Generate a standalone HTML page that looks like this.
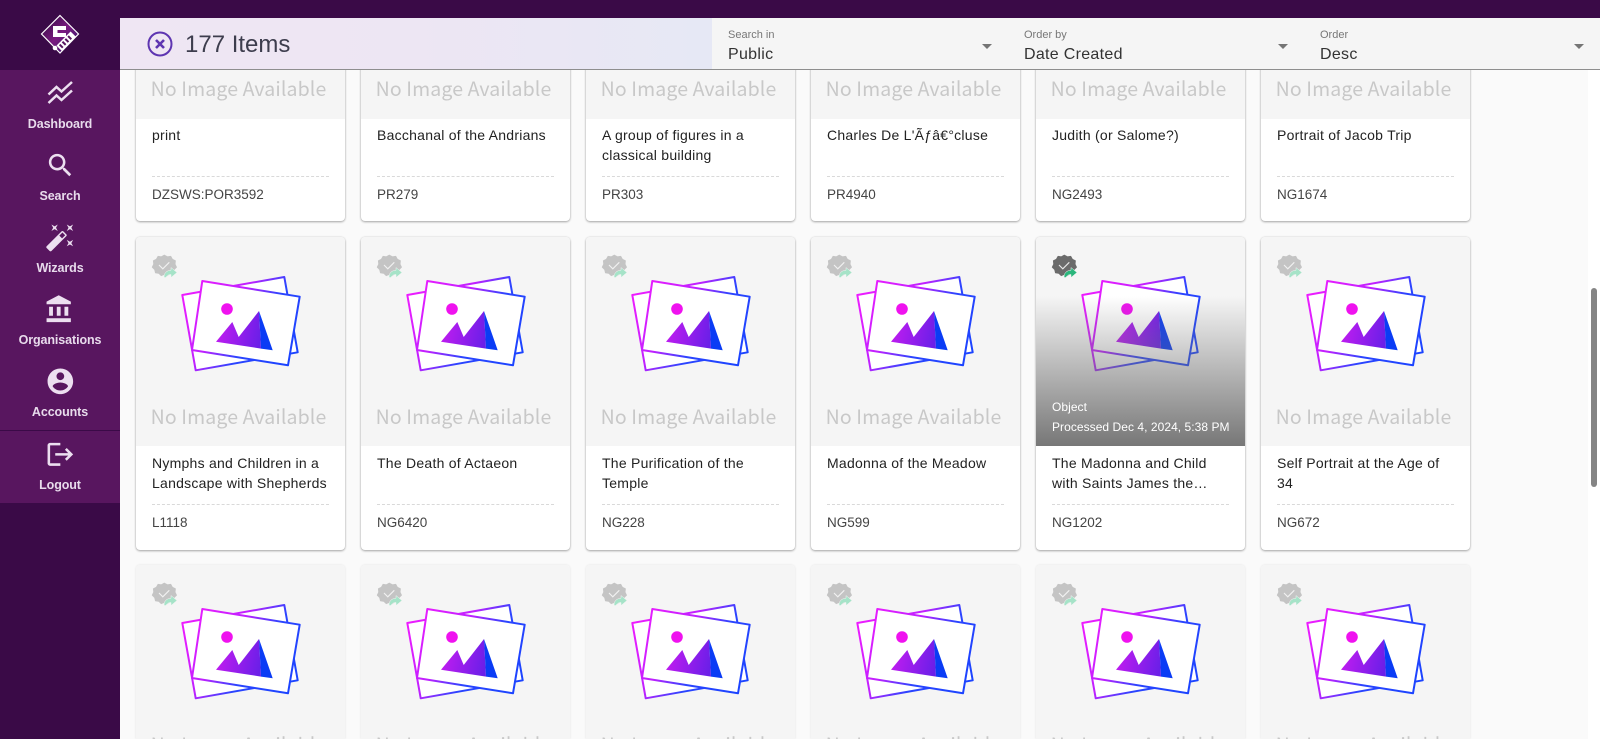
<!DOCTYPE html>
<html><head><meta charset="utf-8"><title>Items</title>
<style>
html,body{margin:0;padding:0;width:1600px;height:739px;overflow:hidden;background:#fafafa;font-family:"Liberation Sans",sans-serif;}
#root{position:absolute;left:0;top:0;width:1600px;height:739px;overflow:hidden;background:#fafafa}
.a{position:absolute}
#side{left:0;top:0;width:120px;height:739px;background:#3a0a47;z-index:5}
#menu{left:0;top:70px;width:120px;height:433px;background:#58165f}
#div{left:0;top:430px;width:120px;height:1px;background:#3a0a47}
.lb{position:absolute;left:0;width:120px;text-align:center;color:#e8dbec;font-size:12.5px;font-weight:bold;line-height:16px;white-space:nowrap;letter-spacing:-.1px}
.ic{position:absolute;fill:#ecdff0}
#top{left:120px;top:0;width:1480px;height:18px;background:#3a0a47;z-index:4}
#hd{left:120px;top:18px;width:1480px;height:51px;background:#f5f5f5;z-index:4}
#grad{left:0;top:0;width:592px;height:51px;background:linear-gradient(90deg,#efe6f3 0%,#ede6f3 50%,#e6e8f5 100%)}
#hl{left:120px;top:69px;width:1480px;height:1px;background:#8e8e8e;z-index:4}
#cnt{top:29px;z-index:6;font-size:24px;line-height:32px;color:#3d3d4d;left:185px}
.sl{position:absolute;top:28px;font-size:11px;line-height:14px;color:#777;z-index:6}
.sv{position:absolute;top:45px;font-size:16px;line-height:20px;color:#333;z-index:6;letter-spacing:.3px}
.ar{position:absolute;top:44px;width:0;height:0;border-left:5px solid transparent;border-right:5px solid transparent;border-top:5px solid #757575;z-index:6}
#sb{left:1588px;top:70px;width:12px;height:669px;background:#fff;z-index:3}
#th{left:1591px;top:288px;width:6px;height:199px;background:#858585;border-radius:3px;z-index:3}
.c{position:absolute;width:209px;height:313px;background:#fff;border-radius:4px;box-shadow:0 1px 2px rgba(0,0,0,.32),0 0 2px rgba(0,0,0,.1);overflow:hidden}
.im{position:absolute;left:0;top:0;width:209px;height:209px;background:#f5f5f5;overflow:hidden}
.im svg{position:absolute;left:0;top:-1px}
.na{position:absolute;left:-2px;top:166px;width:209px;text-align:center;font-family:"Noto Sans CJK JP","Liberation Sans",sans-serif;font-size:19.5px;line-height:26px;color:#c8c8c8;white-space:nowrap;letter-spacing:.12px}
.t{position:absolute;left:16px;top:216px;width:176px;height:40px;font-size:14px;line-height:20px;color:#222;overflow:hidden;letter-spacing:.25px}
.d{position:absolute;left:16px;top:267px;width:177px;border-top:1px dashed #d9d9d9}
.k{position:absolute;left:16px;top:277px;font-size:13.5px;line-height:18px;color:#444}
.ov{position:absolute;left:0;top:59px;width:209px;height:150px;background:linear-gradient(rgba(110,110,110,0),rgba(112,112,112,.95))}
.o1,.o2{position:absolute;left:16px;color:#fff;font-size:12px;line-height:16px;white-space:nowrap;letter-spacing:.05px}
.o1{top:162px}.o2{top:182px}
.r1{height:312px}
.r1 .im{height:210px}
.r3{height:174px;border-radius:4px 4px 0 0;box-shadow:0 0 2px rgba(0,0,0,.1)}
.r3 .im{height:174px}
.r3 .na{height:8px;overflow:hidden}
</style></head>
<body>
<div id="root">
<svg width="0" height="0" style="position:absolute">
<defs>
<linearGradient id="g1" gradientUnits="userSpaceOnUse" x1="50" y1="50" x2="160" y2="125"><stop offset="0" stop-color="#f01cff"/><stop offset=".38" stop-color="#c020ff"/><stop offset=".62" stop-color="#2a44ff"/><stop offset="1" stop-color="#1a44ff"/></linearGradient>
<linearGradient id="g2" gradientUnits="userSpaceOnUse" x1="80" y1="90" x2="125" y2="100"><stop offset="0" stop-color="#c31cf0"/><stop offset="1" stop-color="#6a1fe8"/></linearGradient>
<symbol id="pic" viewBox="0 0 209 210">
<polygon points="46.3,59 148.3,41 161.7,116.3 59.7,134.3" fill="#fff" stroke="url(#g1)" stroke-width="2" stroke-linejoin="round"/>
<polygon points="66.3,45 163.7,60.7 152,129.3 56,114" fill="#fff" stroke="url(#g1)" stroke-width="2" stroke-linejoin="round"/>
<circle cx="91" cy="73" r="5.8" fill="#ef12ef"/>
<polygon points="80,105.7 96.3,86 102.7,101 123,75 125,112.6" fill="url(#g2)"/>
<polygon points="123,75 136.7,114.3 125,112.6" fill="#0a3cf5"/>
</symbol>
<symbol id="bd" viewBox="0 0 209 210">
<g transform="translate(28.3 29) scale(.86) translate(-28.3 -29)"><path d="M28.3 17.500l3.600 1.900 3.900-.5 1.900 3.400 3.500 1.800-.4 3.900 1.700 3.500-2.800 2.800-.9 3.800-3.900.6-2.900 2.700-3.600-1.500-3.600 1.500-2.900-2.700-3.900-.6-.9-3.800-2.800-2.800 1.700-3.500-.4-3.900 3.500-1.800 1.900-3.400 3.900.5z" fill="#c4c4c4" stroke="#c4c4c4" stroke-width="1" stroke-linejoin="round"/></g>
<path d="M23 29l3.800 3.800 6.500-6.500" fill="none" stroke="#f1f1f1" stroke-width="1.100"/>
<path d="M28 41.500c0-5 3-7 7-7.300V31.500l6 5-6 5v-3c-2.500 0-4 1-5 3z" fill="#a6e3c8" stroke="#f5f5f5" stroke-width=".5"/>
</symbol>
<symbol id="bd2" viewBox="0 0 209 210">
<g transform="translate(28.3 29) scale(.86) translate(-28.3 -29)"><path d="M28.3 17.500l3.600 1.900 3.900-.5 1.900 3.400 3.500 1.800-.4 3.900 1.700 3.500-2.800 2.800-.9 3.800-3.900.6-2.900 2.700-3.600-1.500-3.600 1.500-2.900-2.700-3.900-.6-.9-3.800-2.800-2.800 1.700-3.500-.4-3.900 3.500-1.800 1.900-3.400 3.900.5z" fill="#6b6b6b" stroke="#6b6b6b" stroke-width="1" stroke-linejoin="round"/></g>
<path d="M23 29l3.800 3.800 6.500-6.500" fill="none" stroke="#e8e8e8" stroke-width="1.100"/>
<path d="M28 41.500c0-5 3-7 7-7.300V31.500l6 5-6 5v-3c-2.500 0-4 1-5 3z" fill="#2bb67c" stroke="#f5f5f5" stroke-width=".5"/>
</symbol>
</defs>
</svg>

<div class="a" id="side">
  <svg class="a" style="left:40px;top:14px" width="40" height="40" viewBox="0 0 40 40">
    <defs><linearGradient id="lg" x1="0" y1="0" x2="1" y2="1"><stop offset="0" stop-color="#2a0a3a"/><stop offset=".5" stop-color="#7a1a80"/><stop offset="1" stop-color="#2a1566"/></linearGradient></defs>
    <polygon points="20,1.500 38.500,20 20,39 1.500,20" fill="url(#lg)" stroke="#fff" stroke-width="1.200"/>
    <path d="M13 12h13v4h-8.500v3H26v4H13z" fill="#fff"/>
    <g transform="rotate(-45 26 27)"><rect x="16" y="23.500" width="20" height="7.500" fill="#fff"/><rect x="18" y="25" width="2" height="4.500" fill="#58165f"/><rect x="22" y="25" width="2" height="4.500" fill="#58165f"/><rect x="26" y="25" width="2" height="4.500" fill="#58165f"/><rect x="30" y="25" width="2" height="4.500" fill="#58165f"/></g>
    <circle cx="15" cy="34" r="2.300" fill="#fff"/>
  </svg>
  <div class="a" id="menu"></div>
  <div class="a" id="div"></div>

  <svg class="a" style="left:46px;top:80px" width="28" height="26" viewBox="0 0 28 26" fill="none" stroke="#ecdff0" stroke-width="2.500"><path d="M2.500 14.500L10.500 7l5 4.500L26 2"/><path d="M2.500 23L10.500 15.500l5 4.500L26 10.500"/></svg>
  <div class="lb" style="top:116px">Dashboard</div>

  <svg class="ic" style="left:44.500px;top:150px" width="30.700" height="30.700" viewBox="0 0 24 24"><path d="M15.500 14h-.79l-.28-.27C15.410 12.590 16 11.110 16 9.500 16 5.910 13.090 3 9.500 3S3 5.910 3 9.500 5.910 16 9.500 16c1.610 0 3.090-.59 4.230-1.570l.27.28v.79l5 4.990L20.490 19l-4.990-5zm-6 0C7.010 14 5 11.990 5 9.500S7.010 5 9.500 5 14 7.010 14 9.500 11.990 14 9.500 14z"/></svg>
  <div class="lb" style="top:188px">Search</div>

  <svg class="ic" style="left:44.700px;top:221.500px" width="30.700" height="30.700" viewBox="0 0 24 24"><path d="M7.500 5.600L10 7 8.600 4.500 10 2 7.500 3.400 5 2l1.400 2.500L5 7zm12 9.800L17 14l1.400 2.500L17 19l2.500-1.400L22 19l-1.400-2.500L22 14zM22 2l-2.500 1.400L17 2l1.400 2.500L17 7l2.500-1.400L22 7l-1.400-2.500zm-7.630 5.290c-.39-.39-1.020-.39-1.410 0L1.290 18.960c-.39.39-.39 1.020 0 1.410l2.340 2.340c.39.39 1.020.39 1.410 0L16.700 11.050c.39-.39.39-1.020 0-1.410l-2.330-2.350zm-1.030 5.490l-2.120-2.120 2.440-2.440 2.120 2.120-2.440 2.440z"/></svg>
  <div class="lb" style="top:260px">Wizards</div>

  <svg class="ic" style="left:44px;top:293.700px" width="30.700" height="30.700" viewBox="0 0 24 24"><path d="M4 10v7h3v-7H4zm6 0v7h3v-7h-3zM2 22h19v-3H2v3zm14-12v7h3v-7h-3zm-4.500-9L2 6v2h19V6l-9.500-5z"/></svg>
  <div class="lb" style="top:332px">Organisations</div>

  <svg class="ic" style="left:44.500px;top:365.700px" width="30.700" height="30.700" viewBox="0 0 24 24"><path d="M12 2C6.480 2 2 6.480 2 12s4.480 10 10 10 10-4.480 10-10S17.520 2 12 2zm0 3c1.660 0 3 1.340 3 3s-1.340 3-3 3-3-1.340-3-3 1.340-3 3-3zm0 14.200c-2.500 0-4.710-1.280-6-3.220.03-1.990 4-3.080 6-3.080 1.990 0 5.970 1.090 6 3.080-1.290 1.940-3.500 3.220-6 3.220z"/></svg>
  <div class="lb" style="top:404px">Accounts</div>

  <svg class="ic" style="left:44.700px;top:438.900px" width="30.700" height="30.700" viewBox="0 0 24 24"><path d="M17 7l-1.410 1.410L18.170 11H8v2h10.170l-2.580 2.580L17 17l5-5zM4 5h8V3H4c-1.100 0-2 .9-2 2v14c0 1.100.9 2 2 2h8v-2H4V5z"/></svg>
  <div class="lb" style="top:477px">Logout</div>
</div>

<div class="a" id="top"></div>
<div class="a" id="hd"><div class="a" id="grad"></div></div>
<div class="a" id="hl"></div>
<svg class="a" style="left:147px;top:31px;z-index:6" width="26" height="26" viewBox="0 0 26 26" fill="none" stroke="#5e35b1"><circle cx="13" cy="13" r="11.500" stroke-width="2"/><path d="M9 9l8 8M17 9l-8 8" stroke-width="2.600"/></svg>
<div class="a" id="cnt">177 Items</div>

<div class="sl" style="left:728px">Search in</div><div class="sv" style="left:728px">Public</div><div class="ar" style="left:982px"></div>
<div class="sl" style="left:1024px">Order by</div><div class="sv" style="left:1024px">Date Created</div><div class="ar" style="left:1278px"></div>
<div class="sl" style="left:1320px">Order</div><div class="sv" style="left:1320px">Desc</div><div class="ar" style="left:1574px"></div>

<div class="a" id="sb"></div><div class="a" id="th"></div>

<!-- row 1 -->
<div class="c r1" style="left:136px;top:-91px"><div class="im"><div class="na">No Image Available</div></div><div class="t">print</div><div class="d"></div><div class="k">DZSWS:POR3592</div></div>
<div class="c r1" style="left:361px;top:-91px"><div class="im"><div class="na">No Image Available</div></div><div class="t">Bacchanal of the Andrians</div><div class="d"></div><div class="k">PR279</div></div>
<div class="c r1" style="left:586px;top:-91px"><div class="im"><div class="na">No Image Available</div></div><div class="t">A group of figures in a classical building</div><div class="d"></div><div class="k">PR303</div></div>
<div class="c r1" style="left:811px;top:-91px"><div class="im"><div class="na">No Image Available</div></div><div class="t">Charles De L'Ãƒâ€°cluse</div><div class="d"></div><div class="k">PR4940</div></div>
<div class="c r1" style="left:1036px;top:-91px"><div class="im"><div class="na">No Image Available</div></div><div class="t">Judith (or Salome?)</div><div class="d"></div><div class="k">NG2493</div></div>
<div class="c r1" style="left:1261px;top:-91px"><div class="im"><div class="na">No Image Available</div></div><div class="t">Portrait of Jacob Trip</div><div class="d"></div><div class="k">NG1674</div></div>

<!-- row 2 -->
<div class="c" style="left:136px;top:237px"><div class="im"><svg width="209" height="210"><use href="#pic"/><use href="#bd"/></svg><div class="na">No Image Available</div></div><div class="t">Nymphs and Children in a Landscape with Shepherds</div><div class="d"></div><div class="k">L1118</div></div>
<div class="c" style="left:361px;top:237px"><div class="im"><svg width="209" height="210"><use href="#pic"/><use href="#bd"/></svg><div class="na">No Image Available</div></div><div class="t">The Death of Actaeon</div><div class="d"></div><div class="k">NG6420</div></div>
<div class="c" style="left:586px;top:237px"><div class="im"><svg width="209" height="210"><use href="#pic"/><use href="#bd"/></svg><div class="na">No Image Available</div></div><div class="t">The Purification of the Temple</div><div class="d"></div><div class="k">NG228</div></div>
<div class="c" style="left:811px;top:237px"><div class="im"><svg width="209" height="210"><use href="#pic"/><use href="#bd"/></svg><div class="na">No Image Available</div></div><div class="t">Madonna of the Meadow</div><div class="d"></div><div class="k">NG599</div></div>
<div class="c" style="left:1036px;top:237px"><div class="im"><svg width="209" height="210"><use href="#pic"/><use href="#bd2"/></svg><div class="ov"></div><div class="o1">Object</div><div class="o2">Processed Dec 4, 2024, 5:38 PM</div></div><div class="t">The Madonna and Child with Saints James the…</div><div class="d"></div><div class="k">NG1202</div></div>
<div class="c" style="left:1261px;top:237px"><div class="im"><svg width="209" height="210"><use href="#pic"/><use href="#bd"/></svg><div class="na">No Image Available</div></div><div class="t">Self Portrait at the Age of 34</div><div class="d"></div><div class="k">NG672</div></div>

<!-- row 3 -->
<div class="c r3" style="left:136px;top:565px"><div class="im"><svg width="209" height="175" viewBox="0 0 209 175"><use href="#pic" width="209" height="210"/><use href="#bd" width="209" height="210"/></svg><div class="na">No Image Available</div></div></div>
<div class="c r3" style="left:361px;top:565px"><div class="im"><svg width="209" height="175" viewBox="0 0 209 175"><use href="#pic" width="209" height="210"/><use href="#bd" width="209" height="210"/></svg><div class="na">No Image Available</div></div></div>
<div class="c r3" style="left:586px;top:565px"><div class="im"><svg width="209" height="175" viewBox="0 0 209 175"><use href="#pic" width="209" height="210"/><use href="#bd" width="209" height="210"/></svg><div class="na">No Image Available</div></div></div>
<div class="c r3" style="left:811px;top:565px"><div class="im"><svg width="209" height="175" viewBox="0 0 209 175"><use href="#pic" width="209" height="210"/><use href="#bd" width="209" height="210"/></svg><div class="na">No Image Available</div></div></div>
<div class="c r3" style="left:1036px;top:565px"><div class="im"><svg width="209" height="175" viewBox="0 0 209 175"><use href="#pic" width="209" height="210"/><use href="#bd" width="209" height="210"/></svg><div class="na">No Image Available</div></div></div>
<div class="c r3" style="left:1261px;top:565px"><div class="im"><svg width="209" height="175" viewBox="0 0 209 175"><use href="#pic" width="209" height="210"/><use href="#bd" width="209" height="210"/></svg><div class="na">No Image Available</div></div></div>
</div>
</body></html>
